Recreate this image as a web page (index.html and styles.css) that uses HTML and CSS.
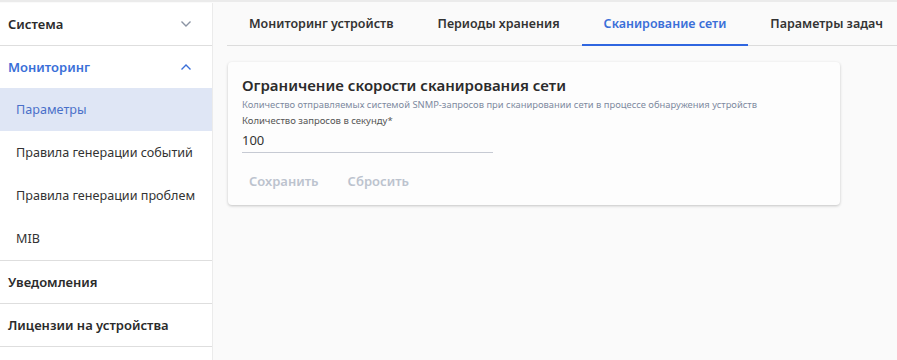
FILE: index.html
```html
<!DOCTYPE html>
<html lang="ru">
<head>
    <meta charset="UTF-8">
    <meta name="viewport" content="width=device-width, initial-scale=1.0">
    <title>Настройки</title>
    <link rel="stylesheet" href="styles.css">
</head>
<body>
    <div class="layout">
        <nav class="sidebar">
            <div class="group">
                <div class="group-head">
                    <span>Система</span>
                    <svg class="chevron" width="12" height="8" viewBox="0 0 12 8"><path d="M1.5 1.5 L6 6 L10.5 1.5" fill="none" stroke="#8a93a3" stroke-width="1.4"/></svg>
                </div>
            </div>
            <div class="group open">
                <div class="group-head">
                    <span>Мониторинг</span>
                    <svg class="chevron" width="12" height="8" viewBox="0 0 12 8"><path d="M1.5 6.5 L6 2 L10.5 6.5" fill="none" stroke="#3a6fd8" stroke-width="1.4"/></svg>
                </div>
                <a class="item active">Параметры</a>
                <a class="item">Правила генерации событий</a>
                <a class="item">Правила генерации проблем</a>
                <a class="item">MIB</a>
            </div>
            <div class="group">
                <div class="group-head"><span>Уведомления</span></div>
            </div>
            <div class="group">
                <div class="group-head"><span>Лицензии на устройства</span></div>
            </div>
        </nav>

        <main class="content">
            <div class="tabs">
                <div class="tab">Мониторинг устройств</div>
                <div class="tab">Периоды хранения</div>
                <div class="tab active">Сканирование сети</div>
                <div class="tab">Параметры задач</div>
            </div>

            <section class="card">
                <h3>Ограничение скорости сканирования сети</h3>
                <p class="hint">Количество отправляемых системой SNMP-запросов при сканировании сети в процессе обнаружения устройств</p>
                <label class="field">
                    <span class="field-label">Количество запросов в секунду*</span>
                    <input type="text" value="100">
                </label>
                <div class="actions">
                    <button disabled>Сохранить</button>
                    <button disabled>Сбросить</button>
                </div>
            </section>
        </main>
    </div>
</body>
</html>
```

FILE: styles.css
```css
body {
    margin: 0;
    font-family: "Noto Sans", "Open Sans", sans-serif;
    background-color: #fafafa;
    color: #333;
}
.layout {
    display: flex;
    min-height: 360px;
    border-top: 2px solid #ebebeb;
    box-sizing: border-box;
    padding-top: 1px;
}
.sidebar {
    width: 212px;
    flex-shrink: 0;
    background-color: #fff;
    border-right: 1px solid #ebebeb;
}
.group {
    border-bottom: 1px solid #dedede;
}
.group-head {
    height: 42px;
    display: flex;
    align-items: center;
    justify-content: space-between;
    padding: 0 20px 0 8px;
    font-size: 13px;
    font-weight: 600;
    color: #2b2b2b;
}
.group.open .group-head {
    color: #3a6fd8;
}
.chevron {
    display: block;
}
.item {
    display: flex;
    align-items: center;
    height: 43px;
    padding-left: 16px;
    font-size: 12.6px;
    color: #333;
}
.item.active {
    background-color: #dfe6f5;
    color: #4a70c9;
}
.content {
    flex: 1;
    min-width: 0;
    padding: 0 0 0 14px;
}
.tabs {
    display: flex;
    height: 42px;
    border-bottom: 1px solid #dcdcdc;
}
.tab {
    display: flex;
    align-items: center;
    flex-shrink: 0;
    white-space: nowrap;
    padding: 0 22px;
    font-size: 12.5px;
    font-weight: 600;
    color: #333;
    border-bottom: 2px solid transparent;
    margin-bottom: -1px;
}
.tab.active {
    color: #3a6fd8;
    border-bottom-color: #2f66e0;
}
.card {
    width: 612px;
    margin-top: 16px;
    margin-left: 1px;
    padding: 13px 14px 9px;
    box-sizing: border-box;
    background-color: #fdfdfd;
    border-radius: 4px;
    box-shadow: 0 1px 3px rgba(0, 0, 0, 0.22);
}
.card h3 {
    margin: 0;
    font-size: 15px;
    font-weight: 600;
    color: #2b2b2b;
    line-height: 20px;
}
.hint {
    margin: 3px 0 0;
    font-size: 9.4px;
    color: #7d8aa0;
    line-height: 14px;
}
.field {
    display: block;
    width: 251px;
    margin-top: 2px;
}
.field-label {
    display: block;
    font-size: 9.5px;
    color: #555;
    line-height: 14px;
}
.field input {
    display: block;
    width: 100%;
    box-sizing: border-box;
    border: none;
    border-bottom: 1px solid #c6cad3;
    background: transparent;
    padding: 3px 0 3px;
    height: 25px;
    font-family: "Noto Sans", "Open Sans", sans-serif;
    font-size: 13px;
    line-height: 18px;
    color: #333;
    outline: none;
}
.actions {
    display: flex;
    margin-top: 13px;
}
.actions button {
    background: none;
    border: none;
    padding: 6px 7px;
    margin-right: 15px;
    font-family: "Noto Sans", "Open Sans", sans-serif;
    font-size: 13px;
    line-height: 18px;
    font-weight: 600;
    color: #bcc3ce;
}
```
